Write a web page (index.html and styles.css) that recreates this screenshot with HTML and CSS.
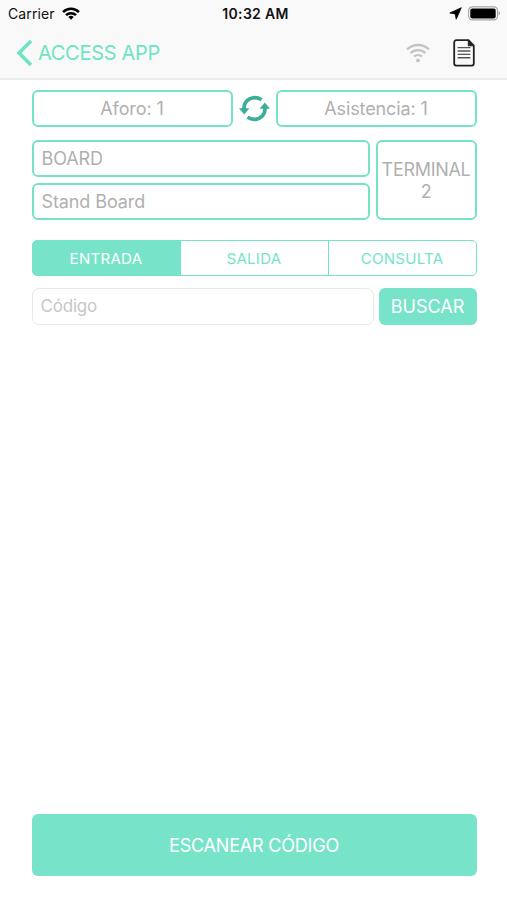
FILE: index.html
```html
<!DOCTYPE html>
<html lang="es">
<head>
  <meta charset="UTF-8">
  <meta name="viewport" content="width=device-width, initial-scale=1.0">
  <title>Access App</title>
  <link rel="stylesheet" href="styles.css">
</head>
<body>
  <header>
    <div class="status-bar">
      <div class="carrier">
        <span>Carrier</span>
        <svg width="18" height="13" viewBox="0 0 18 13" fill="none" stroke="#000" stroke-width="2.5">
          <path d="M1.1 5.1a11.2 11.2 0 0 1 15.8 0"/>
          <path d="M4 8.200a7.1 7.1 0 0 1 10 0"/>
          <path d="M9 12.8L6.3 10a3.8 3.8 0 0 1 5.4 0z" fill="#000" stroke="none"/>
        </svg>
      </div>
      <span class="time">10:32 AM</span>
      <div class="status-icons">
        <svg width="13" height="13" viewBox="0 0 13 13"><path d="M12.3.7L7.2 12.3 6.2 6.900.8 6z" stroke="#000" stroke-width=".8" stroke-linejoin="round"/></svg>
        <svg width="33" height="15" viewBox="0 0 33 15">
          <rect x=".7" y=".9" width="28.8" height="13" rx="3.6" fill="#fff" stroke="#a5a5a5" stroke-width="1.2"/>
          <rect x="2.3" y="2.6" width="25.4" height="9.8" rx="2"/>
          <path d="M30.7 5.3c1.8.7 1.8 3.5 0 4.2z" fill="#a5a5a5"/>
        </svg>
      </div>
    </div>
    <nav class="nav-bar">
      <a class="back">
        <svg width="17" height="28" viewBox="0 0 17 28" fill="none" stroke="#6fe3c5" stroke-width="3.6"><path d="M15 2L3 14l12 12"/></svg>
        <span>ACCESS APP</span>
      </a>
      <div class="nav-icons">
        <svg width="24" height="20" viewBox="0 0 24 20" fill="none" stroke="#c4c4c4" stroke-width="2.3">
          <path d="M1 6.4a16 16 0 0 1 22 0"/>
          <path d="M4.5 10a11 11 0 0 1 15 0"/>
          <path d="M8 13.5a6.2 6.2 0 0 1 8 0"/>
          <circle cx="12" cy="17.4" r="1.9" fill="#c4c4c4" stroke="none"/>
        </svg>
        <svg width="22" height="28" viewBox="0 0 22 28" fill="none" stroke="#222" stroke-width="1.8">
          <path d="M15.5 1.2H3.2a2 2 0 0 0-2 2v21.4a2 2 0 0 0 2 2h15.6a2 2 0 0 0 2-2V6.6z"/>
          <path d="M15.3 1.2v5.6h5.5z" fill="#222" stroke-width="1"/>
          <path d="M4.6 8.6h12.8M4.6 12h12.8M4.6 15.4h12.8M4.6 18.8h12.8" stroke="#555" stroke-width="1.4"/>
        </svg>
      </div>
    </nav>
  </header>

  <main>
    <div class="counters">
      <div class="box">Aforo: 1</div>
      <svg width="31" height="27" viewBox="0 0 31 27" fill="none" stroke="#3cae98" stroke-width="3.7">
        <path d="M5 14.5C4.5 4.5 14.5-.3 22.6 4.7"/>
        <path d="M26 12.5C26.5 22.5 16.5 27.3 8.4 22.3"/>
        <path d="M0 13.2H10.400L5.200 19.600z" fill="#3cae98" stroke="none"/>
        <path d="M31 13.800H20.600L25.800 7.400z" fill="#3cae98" stroke="none"/>
      </svg>
      <div class="box">Asistencia: 1</div>
    </div>

    <div class="info">
      <div class="names">
        <div class="box name">BOARD</div>
        <div class="box name">Stand Board</div>
      </div>
      <div class="box terminal">TERMINAL<br>2</div>
    </div>

    <div class="tabs">
      <button class="tab active">ENTRADA</button>
      <button class="tab">SALIDA</button>
      <button class="tab">CONSULTA</button>
    </div>

    <form class="search" onsubmit="return false">
      <input type="text" placeholder="Código">
      <button class="search-btn">BUSCAR</button>
    </form>

    <button class="scan-btn">ESCANEAR CÓDIGO</button>
  </main>
</body>
</html>
```

FILE: styles.css
```css
* {
  box-sizing: border-box;
}

body {
  display: flex;
  flex-direction: column;
  height: 100vh;
  margin: 0;
  font-family: Inter, "Liberation Sans", sans-serif;
  font-size: 18px;
  letter-spacing: -0.1px;
  color: #b0b0b0;
  background-color: #fff;
}

svg {
  display: block;
  flex: none;
}

header {
  height: 80px;
  background-color: #f9f9f9;
  border-bottom: 2px solid #ebebeb;
}

.status-bar {
  display: grid;
  grid-template-columns: 1fr auto 1fr;
  align-items: center;
  height: 27px;
  padding: 0 6px 0 8px;
  font-size: 14px;
  letter-spacing: 0.1px;
  color: #111;
}

.carrier {
  display: flex;
  align-items: center;
  gap: 7px;
}

.time {
  padding-left: 2px;
  font-weight: 600;
  letter-spacing: 0.3px;
}

.status-icons {
  display: flex;
  align-items: center;
  justify-content: flex-end;
  gap: 6px;
}

.nav-bar {
  display: flex;
  align-items: center;
  justify-content: space-between;
  height: 51px;
  padding: 0 32px 0 16px;
}

.back {
  display: flex;
  align-items: center;
  gap: 5px;
  font-size: 20px;
  letter-spacing: -0.3px;
  color: #6fe3c5;
}

.nav-icons {
  display: flex;
  align-items: center;
  gap: 23px;
}

main {
  display: flex;
  flex: 1;
  flex-direction: column;
  padding: 10px 30.5px 24px 31.5px;
}

.box {
  display: flex;
  align-items: center;
  justify-content: center;
  height: 37px;
  border: 2px solid #75e3c7;
  border-radius: 6px;
}

.counters {
  display: flex;
  align-items: center;
  gap: 6px;
}

.counters .box {
  flex: 1;
}

.info {
  display: flex;
  gap: 6px;
  margin-top: 13px;
}

.names {
  display: flex;
  flex: 1;
  flex-direction: column;
  gap: 6px;
}

.name {
  justify-content: flex-start;
  padding-left: 8px;
}

.terminal {
  width: 101px;
  height: 80px;
  padding-top: 2px;
  line-height: 22px;
  letter-spacing: -0.3px;
  text-align: center;
}

button {
  padding: 0;
  font-family: inherit;
  border: none;
  color: #fff;
  background-color: #77e4c9;
}

.tabs {
  display: flex;
  height: 36px;
  margin-top: 20px;
  background-color: #77e4c9;
  border: 1px solid #75e3c7;
  border-radius: 5px;
  overflow: hidden;
}

.tab {
  flex: 1;
  font-size: 15px;
  letter-spacing: 0.3px;
  color: #75e3c7;
  background-color: #fff;
  border-left: 1px solid #75e3c7;
}

.tab.active {
  color: #fff;
  background-color: #77e4c9;
  border-left: none;
}

.search {
  display: flex;
  gap: 5px;
  height: 37px;
  margin-top: 12px;
}

input {
  flex: 1;
  min-width: 0;
  padding: 0 8px 2px;
  font-family: inherit;
  font-size: 17px;
  letter-spacing: -0.2px;
  border: 1px solid #e8e8e8;
  border-radius: 7px;
}

input::placeholder {
  color: #c7c7c7;
}

.search-btn {
  width: 98px;
  font-size: 18px;
  border-radius: 6px;
}

.scan-btn {
  height: 62px;
  margin-top: auto;
  font-size: 18px;
  letter-spacing: -0.2px;
  border-radius: 6px;
}
```
